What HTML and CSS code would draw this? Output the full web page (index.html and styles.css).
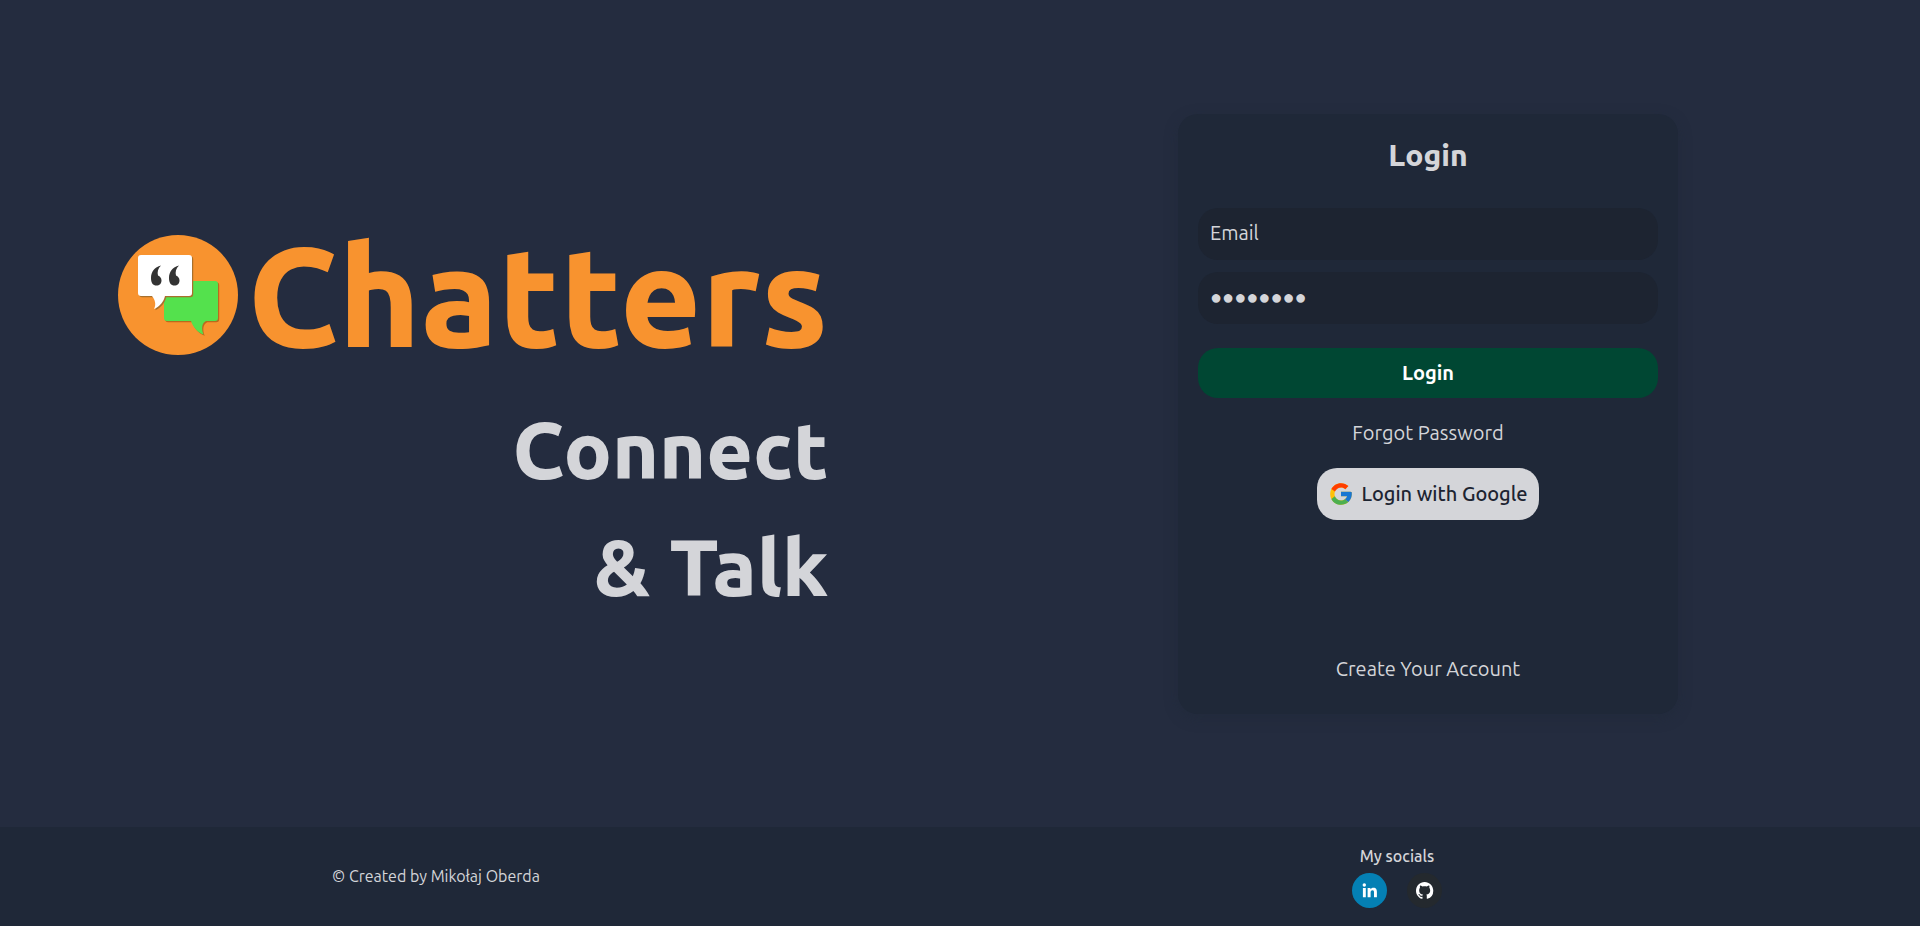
FILE: index.html
```html
<!DOCTYPE html>
<html lang="en">
<head>
<meta charset="utf-8">
<meta name="viewport" content="width=device-width, initial-scale=1">
<title>Chatters</title>
<link rel="stylesheet" href="styles.css">
</head>
<body>
<main class="main">
  <section class="hero">
    <div class="brand">
      <svg class="brand-logo" viewBox="0 0 120 120" aria-hidden="true">
        <circle cx="60" cy="60" r="60" fill="#f8932f"/>
        <path fill="#b96a1e" transform="translate(1.2 1.2)" d="M49 46H97a3 3 0 0 1 3 3V83a3 3 0 0 1-3 3H88C84 88 83 93 85.500 99.500C79 97 75 92 73 86H49a3 3 0 0 1-3-3V49a3 3 0 0 1 3-3Z"/>
        <path fill="#54e14d" d="M49 46H97a3 3 0 0 1 3 3V83a3 3 0 0 1-3 3H88C84 88 83 93 85.500 99.500C79 97 75 92 73 86H49a3 3 0 0 1-3-3V49a3 3 0 0 1 3-3Z"/>
        <path fill="#a8702c" transform="translate(1.2 1.2)" d="M23 20H71a3 3 0 0 1 3 3V58a3 3 0 0 1-3 3H47C45.500 67 42 71.500 36 74C38.500 69 37 65 34 61H23a3 3 0 0 1-3-3V23a3 3 0 0 1 3-3Z"/>
        <path fill="#fff" d="M23 20H71a3 3 0 0 1 3 3V58a3 3 0 0 1-3 3H47C45.500 67 42 71.500 36 74C38.500 69 37 65 34 61H23a3 3 0 0 1-3-3V23a3 3 0 0 1 3-3Z"/>
        <path fill="#333" d="M43 30.500C36.500 32 33 37 33 43C33 48 35 50.500 38.500 50.500C41.500 50.500 43.500 48.500 43.500 45.500C43.500 43 42 41.500 40 40.500C39 37 40 33.500 43 30.500Z"/>
        <path fill="#333" transform="translate(18 0)" d="M43 30.500C36.500 32 33 37 33 43C33 48 35 50.500 38.500 50.500C41.500 50.500 43.500 48.500 43.500 45.500C43.500 43 42 41.500 40 40.500C39 37 40 33.500 43 30.500Z"/>
      </svg>
      <h1 class="brand-name">Chatters</h1>
    </div>
    <p class="tagline">Connect<br>&amp; Talk</p>
  </section>
  <section class="login">
    <form class="card">
      <h2 class="card-title">Login</h2>
      <input class="field" type="email" placeholder="Email" aria-label="Email">
      <input class="field" type="password" placeholder="●●●●●●●●" aria-label="Password">
      <button class="submit" type="button">Login</button>
      <a class="link" href="#forgot">Forgot Password</a>
      <button class="google" type="button">
        <svg class="google-icon" viewBox="0 0 48 48" aria-hidden="true">
          <path fill="#FFC107" d="M43.611 20.083H42V20H24v8h11.303c-1.649 4.657-6.080 8-11.303 8-6.627 0-12-5.373-12-12s5.373-12 12-12c3.059 0 5.842 1.154 7.961 3.039l5.657-5.657C34.046 6.053 29.268 4 24 4 12.955 4 4 12.955 4 24s8.955 20 20 20 20-8.955 20-20c0-1.341-.138-2.650-.389-3.917z"/>
          <path fill="#FF3D00" d="M6.306 14.691l6.571 4.819C14.655 15.108 18.961 12 24 12c3.059 0 5.842 1.154 7.961 3.039l5.657-5.657C34.046 6.053 29.268 4 24 4 16.318 4 9.656 8.337 6.306 14.691z"/>
          <path fill="#4CAF50" d="M24 44c5.166 0 9.860-1.977 13.409-5.192l-6.190-5.238C29.211 35.091 26.715 36 24 36c-5.202 0-9.619-3.317-11.283-7.946l-6.522 5.025C9.505 39.556 16.227 44 24 44z"/>
          <path fill="#1976D2" d="M43.611 20.083H42V20H24v8h11.303c-.792 2.237-2.231 4.166-4.087 5.571l6.193 5.238C36.971 39.205 44 34 44 24c0-1.341-.138-2.650-.389-3.917z"/>
        </svg>
        Login with Google
      </button>
      <a class="link link-create" href="#register">Create Your Account</a>
    </form>
  </section>
</main>
<footer class="footer">
  <p class="copyright">© Created by Mikołaj Oberda</p>
  <div class="socials">
    <p class="socials-title">My socials</p>
    <div class="socials-list">
      <a class="social social-linkedin" href="#linkedin" aria-label="LinkedIn">
        <svg viewBox="0 0 35 35" aria-hidden="true" fill="#fff">
          <circle cx="12.300" cy="12" r="1.700"/>
          <path d="M10.900 15h2.900v9.200h-2.900zM15.600 15h2.800v1.300c.6-1 1.700-1.600 3-1.600 2.900 0 3.500 1.900 3.500 4.400v5.100H22v-4.500c0-1.100 0-2.500-1.500-2.500s-1.900 1.200-1.900 2.400v4.600h-3z"/>
        </svg>
      </a>
      <a class="social social-github" href="#github" aria-label="GitHub">
        <svg viewBox="0 0 35 35" aria-hidden="true">
          <path fill="#fff" transform="translate(9 9) scale(1.080)" d="M8 0C3.580 0 0 3.580 0 8c0 3.540 2.290 6.530 5.470 7.590.4.070.55-.17.550-.38 0-.19-.01-.82-.01-1.490-2.010.37-2.530-.49-2.690-.94-.09-.23-.48-.94-.82-1.130-.28-.15-.68-.52-.01-.53.630-.01 1.080.58 1.230.82.720 1.210 1.870.87 2.330.66.070-.52.280-.87.510-1.070-1.780-.2-3.640-.89-3.640-3.950 0-.87.310-1.590.82-2.150-.08-.2-.36-1.020.080-2.120 0 0 .67-.21 2.200.82.640-.18 1.320-.27 2-.27s1.360.09 2 .27c1.530-1.040 2.200-.82 2.200-.82.440 1.100.16 1.920.080 2.120.51.560.82 1.270.82 2.150 0 3.070-1.870 3.750-3.650 3.950.29.250.54.730.54 1.480 0 1.070-.01 1.930-.01 2.200 0 .21.150.46.550.38A8.010 8.010 0 0 0 16 8c0-4.420-3.580-8-8-8z"/>
        </svg>
      </a>
    </div>
  </div>
</footer>
</body>
</html>
```
FILE: styles.css
```css
* { box-sizing: border-box; margin: 0; }

body {
  min-height: 100vh;
  display: flex;
  flex-direction: column;
  background: #242c3f;
  color: #d4d5d9;
  font-family: Ubuntu, "Noto Sans", sans-serif;
  font-size: 20px;
}

.main {
  flex: 1;
  display: grid;
  grid-template-columns: 1fr 1fr;
  align-items: center;
  padding-right: 16px;
}

.hero {
  justify-self: center;
  display: flex;
  flex-direction: column;
  align-items: flex-end;
  padding: 0 6px 4px 0;
}

.brand { display: flex; align-items: center; gap: 10px; }
.brand-logo { width: 120px; height: 120px; }
.brand-name {
  color: #f8932f;
  font-size: 140px;
  font-weight: 800;
  line-height: 192px;
}
.tagline {
  font-size: 80px;
  font-weight: 800;
  line-height: 117px;
  text-align: right;
}

.login { display: flex; justify-content: center; }
.card {
  width: 500px;
  min-height: 600px;
  display: flex;
  flex-direction: column;
  align-items: center;
  padding: 20px;
  border-radius: 20px;
  background: #1f2838;
  box-shadow: 0 4px 14px rgba(31, 40, 56, .4);
}
.card-title {
  margin-bottom: 32px;
  font-size: 30px;
  font-weight: 800;
  line-height: 42px;
}
.field {
  width: 100%;
  height: 52px;
  margin-bottom: 12px;
  padding: 0 12px 2px;
  border: 0;
  border-radius: 20px;
  background: #1d2431;
  color: inherit;
  font: inherit;
}
.field::placeholder { color: inherit; opacity: 1; }
.submit {
  width: 100%;
  height: 50px;
  margin: 12px 0 20px;
  border: 0;
  border-radius: 20px;
  background: #004733;
  color: #fff;
  font: inherit;
  font-weight: 600;
}
.link { color: inherit; line-height: 30px; text-decoration: none; }
.google {
  height: 52px;
  display: flex;
  align-items: center;
  gap: 7px;
  margin-top: 20px;
  padding: 0 11px;
  border: 0;
  border-radius: 20px;
  background: #d4d5d9;
  color: #1d2431;
  font: inherit;
  font-weight: 500;
}
.google-icon { width: 26px; height: 26px; }
.link-create { margin: auto 0 10px; }

.footer {
  display: grid;
  grid-template-columns: 1fr 1fr;
  align-items: center;
  justify-items: center;
  padding: 16px 0 18px;
  background: #1f2838;
  font-size: 16px;
}
.copyright { margin-right: 88px; }
.socials { margin-right: 86px; text-align: center; }
.socials-title { font-weight: 500; line-height: 26px; margin-bottom: 4px; }
.socials-list { display: flex; gap: 20px; }
.social { width: 35px; height: 35px; border-radius: 50%; }
.social svg { display: block; }
.social-linkedin { background: #0480b4; }
.social-github { background: #24292e; }
```
